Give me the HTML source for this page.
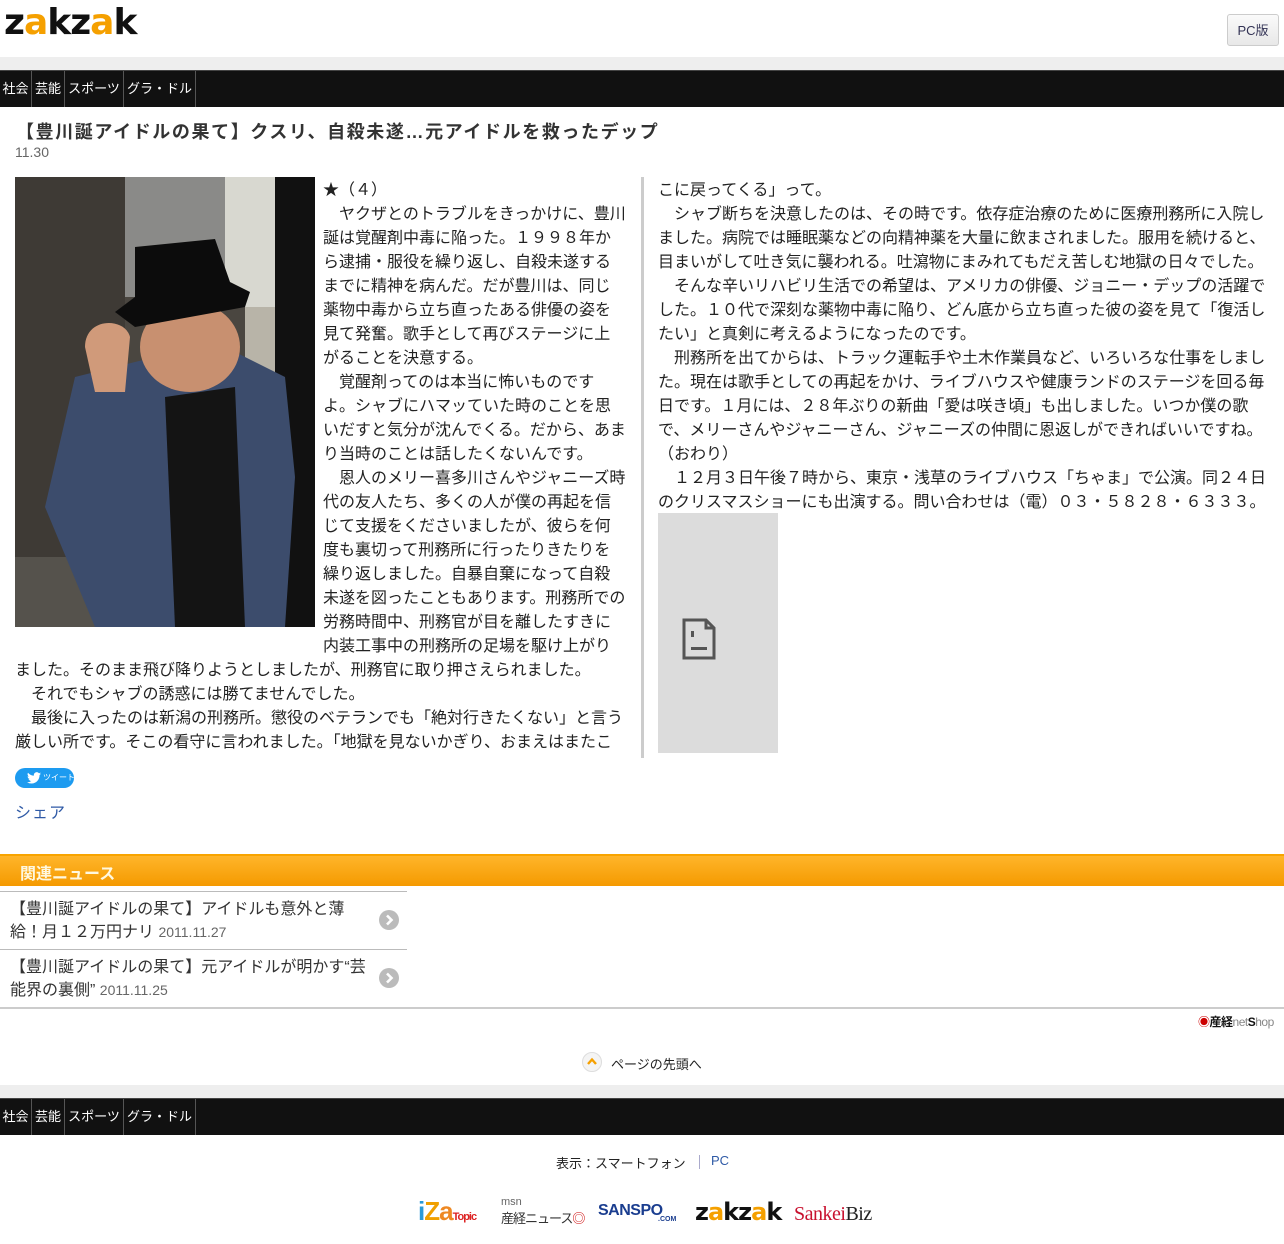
<!DOCTYPE html>
<html><head><meta charset="utf-8">
<style>
*{margin:0;padding:0;box-sizing:border-box}
body{width:1284px;height:1244px;background:#fff;font-family:"Liberation Sans","Noto Sans CJK JP",sans-serif;color:#222;position:relative;overflow:hidden}
.a{position:absolute;white-space:nowrap}
.nav{position:absolute;left:0;width:1284px;height:37px;background:#111;border-top:1px solid #444}
.nav span{position:absolute;top:0;height:36px;line-height:36px;color:#fff;font-size:13px;border-right:1px solid #555;text-align:center;overflow:hidden}
.t{font-size:16px;line-height:24px;letter-spacing:0;color:#222}
.logo{font-family:"DejaVu Sans",sans-serif;font-weight:bold;letter-spacing:-1px}
.logo i{font-style:normal;color:#f5a000}
</style></head><body>
<div class="a logo" style="left:4px;top:2px;font-size:36px;color:#111">z<i>a</i>kz<i>a</i>k</div>
<div class="a" style="left:1227px;top:14px;width:52px;height:32px;border:1px solid #ccc;border-radius:3px;background:linear-gradient(#fafafa,#e8e8e8);font-size:13px;color:#335;text-align:center;line-height:32px">PC版</div>
<div class="a" style="left:0;top:57px;width:1284px;height:13px;background:#eee"></div>
<div class="nav" style="top:70px"><span style="left:0;width:32px">社会</span><span style="left:32px;width:33px">芸能</span><span style="left:65px;width:59px">スポーツ</span><span style="left:124px;width:72px">グラ・ドル</span></div>
<div class="a" style="left:16px;top:118px;font-size:18px;font-weight:bold;letter-spacing:1.6px;color:#333">【豊川誕アイドルの果て】クスリ、自殺未遂…元アイドルを救ったデップ</div>
<div class="a" style="left:15px;top:144px;font-size:14px;color:#666">11.30</div>
<svg class="a" style="left:15px;top:177px" width="300" height="450" viewBox="0 0 300 450">
<rect width="300" height="450" fill="#4a4640"/>
<rect x="0" y="0" width="110" height="450" fill="#3e3a35"/>
<rect x="110" y="0" width="100" height="120" fill="#8a8a88"/>
<rect x="210" y="0" width="50" height="130" fill="#d8d8d0"/>
<rect x="230" y="130" width="40" height="220" fill="#b8b4a8"/>
<rect x="260" y="0" width="40" height="450" fill="#111"/>
<rect x="0" y="380" width="100" height="70" fill="#55524c"/>
<path d="M30 330 L60 200 L140 180 L210 170 L270 200 L280 300 L270 450 L80 450 Z" fill="#3c4c6c"/>
<path d="M150 220 L220 210 L230 450 L160 450 Z" fill="#141414"/>
<ellipse cx="175" cy="170" rx="50" ry="45" fill="#c89070"/>
<path d="M70 170 C70 140 110 140 115 160 L110 215 L80 215 Z" fill="#d09a7a"/>
<path d="M120 70 L200 62 L215 105 L235 115 L230 130 L120 150 L100 135 L120 120 Z" fill="#0c0c0c"/>
</svg>
<div class="t">
<div class="a" style="left:323px;top:179px">★（４）</div>
<div class="a" style="left:323px;top:203px">　ヤクザとのトラブルをきっかけに、豊川</div>
<div class="a" style="left:323px;top:227px">誕は覚醒剤中毒に陥った。１９９８年か</div>
<div class="a" style="left:323px;top:251px">ら逮捕・服役を繰り返し、自殺未遂する</div>
<div class="a" style="left:323px;top:275px">までに精神を病んだ。だが豊川は、同じ</div>
<div class="a" style="left:323px;top:299px">薬物中毒から立ち直ったある俳優の姿を</div>
<div class="a" style="left:323px;top:323px">見て発奮。歌手として再びステージに上</div>
<div class="a" style="left:323px;top:347px">がることを決意する。</div>
<div class="a" style="left:323px;top:371px">　覚醒剤ってのは本当に怖いものです</div>
<div class="a" style="left:323px;top:395px">よ。シャブにハマッていた時のことを思</div>
<div class="a" style="left:323px;top:419px">いだすと気分が沈んでくる。だから、あま</div>
<div class="a" style="left:323px;top:443px">り当時のことは話したくないんです。</div>
<div class="a" style="left:323px;top:467px">　恩人のメリー喜多川さんやジャニーズ時</div>
<div class="a" style="left:323px;top:491px">代の友人たち、多くの人が僕の再起を信</div>
<div class="a" style="left:323px;top:515px">じて支援をくださいましたが、彼らを何</div>
<div class="a" style="left:323px;top:539px">度も裏切って刑務所に行ったりきたりを</div>
<div class="a" style="left:323px;top:563px">繰り返しました。自暴自棄になって自殺</div>
<div class="a" style="left:323px;top:587px">未遂を図ったこともあります。刑務所での</div>
<div class="a" style="left:323px;top:611px">労務時間中、刑務官が目を離したすきに</div>
<div class="a" style="left:323px;top:635px">内装工事中の刑務所の足場を駆け上がり</div>
<div class="a" style="left:15px;top:659px">ました。そのまま飛び降りようとしましたが、刑務官に取り押さえられました。</div>
<div class="a" style="left:15px;top:683px">　それでもシャブの誘惑には勝てませんでした。</div>
<div class="a" style="left:15px;top:707px">　最後に入ったのは新潟の刑務所。懲役のベテランでも「絶対行きたくない」と言う</div>
<div class="a" style="left:15px;top:731px">厳しい所です。そこの看守に言われました。「地獄を見ないかぎり、おまえはまたこ</div>
</div>
<div class="a" style="left:641px;top:177px;width:3px;height:581px;background:#ccc"></div>
<div class="t">
<div class="a" style="left:658px;top:179px">こに戻ってくる」って。</div>
<div class="a" style="left:658px;top:203px">　シャブ断ちを決意したのは、その時です。依存症治療のために医療刑務所に入院し</div>
<div class="a" style="left:658px;top:227px">ました。病院では睡眠薬などの向精神薬を大量に飲まされました。服用を続けると、</div>
<div class="a" style="left:658px;top:251px">目まいがして吐き気に襲われる。吐瀉物にまみれてもだえ苦しむ地獄の日々でした。</div>
<div class="a" style="left:658px;top:275px">　そんな辛いリハビリ生活での希望は、アメリカの俳優、ジョニー・デップの活躍で</div>
<div class="a" style="left:658px;top:299px">した。１０代で深刻な薬物中毒に陥り、どん底から立ち直った彼の姿を見て「復活し</div>
<div class="a" style="left:658px;top:323px">たい」と真剣に考えるようになったのです。</div>
<div class="a" style="left:658px;top:347px">　刑務所を出てからは、トラック運転手や土木作業員など、いろいろな仕事をしまし</div>
<div class="a" style="left:658px;top:371px">た。現在は歌手としての再起をかけ、ライブハウスや健康ランドのステージを回る毎</div>
<div class="a" style="left:658px;top:395px">日です。１月には、２８年ぶりの新曲「愛は咲き頃」も出しました。いつか僕の歌</div>
<div class="a" style="left:658px;top:419px">で、メリーさんやジャニーさん、ジャニーズの仲間に恩返しができればいいですね。</div>
<div class="a" style="left:658px;top:443px">（おわり）</div>
<div class="a" style="left:658px;top:467px">　１２月３日午後７時から、東京・浅草のライブハウス「ちゃま」で公演。同２４日</div>
<div class="a" style="left:658px;top:491px">のクリスマスショーにも出演する。問い合わせは（電）０３・５８２８・６３３３。</div>
</div>
<div class="a" style="left:658px;top:513px;width:120px;height:240px;background:#dcdcdc"></div>
<svg class="a" style="left:682px;top:618px" width="34" height="42" viewBox="0 0 34 42"><path d="M2 2 H24 L32 10 V40 H2 Z" fill="none" stroke="#555" stroke-width="3"/><path d="M24 2 V10 H32" fill="none" stroke="#555" stroke-width="3"/><rect x="9" y="13" width="3" height="6" fill="#555"/><rect x="9" y="29" width="16" height="3" fill="#555"/></svg>
<div class="a" style="left:15px;top:768px;width:59px;height:20px;border-radius:10px;background:#1d9bf0;color:#fff;font-size:8px;line-height:20px;padding-left:28px;overflow:hidden">ツイート</div>
<svg class="a" style="left:27px;top:772px" width="14" height="12" viewBox="0 0 24 20"><path d="M24 2.4c-.9.4-1.8.7-2.8.8 1-.6 1.8-1.6 2.2-2.7-1 .6-2 1-3.1 1.200A4.9 4.9 0 0 0 11.9 6 14 14 0 0 1 1.7.9 4.9 4.9 0 0 0 3.2 7.5c-.8 0-1.6-.3-2.2-.6 0 2.4 1.7 4.4 3.9 4.8-.7.2-1.5.2-2.2.1.6 2 2.4 3.4 4.6 3.4A9.9 9.9 0 0 1 0 17.3 14 14 0 0 0 7.5 19.5c9 0 14-7.5 14-14v-.6c1-.7 1.8-1.6 2.5-2.5z" fill="#fff"/></svg>
<div class="a" style="left:15px;top:799px;font-size:16px;color:#2f5aa6;letter-spacing:1px">シェア</div>
<div class="a" style="left:0;top:854px;width:1284px;height:32px;background:linear-gradient(#ffb52a,#f59a00);border-top:2px solid #f8a400"></div>
<div class="a" style="left:20px;top:860px;font-size:16px;font-weight:bold;color:#fff8e0">関連ニュース</div>
<div class="a" style="left:0;top:891px;width:407px;height:1px;background:#bbb"></div>
<div class="a" style="left:10px;top:898px;font-size:16px;line-height:23px;color:#333">【豊川誕アイドルの果て】アイドルも意外と薄<br>給！月１２万円ナリ <span style="font-size:14px;color:#666">2011.11.27</span></div>
<div class="a" style="left:0;top:949px;width:407px;height:1px;background:#bbb"></div>
<div class="a" style="left:10px;top:956px;font-size:16px;line-height:23px;color:#333">【豊川誕アイドルの果て】元アイドルが明かす“芸<br>能界の裏側” <span style="font-size:14px;color:#666">2011.11.25</span></div>
<svg class="a" style="left:379px;top:910px" width="20" height="20"><circle cx="10" cy="10" r="10" fill="#bbb"/><path d="M8 5.5 L12.5 10 L8 14.5" stroke="#fff" stroke-width="2.6" fill="none"/></svg>
<svg class="a" style="left:379px;top:968px" width="20" height="20"><circle cx="10" cy="10" r="10" fill="#bbb"/><path d="M8 5.5 L12.5 10 L8 14.5" stroke="#fff" stroke-width="2.6" fill="none"/></svg>
<div class="a" style="left:0;top:1007px;width:1284px;height:2px;background:#ccc"></div>
<div class="a" style="left:1198px;top:1013px;font-size:12px;color:#111;letter-spacing:-0.5px"><span style="color:#c00">◉</span><b>産経</b><span style="color:#888">net</span><b>S</b><span style="color:#888">hop</span></div>
<svg class="a" style="left:582px;top:1052px" width="20" height="20"><circle cx="10" cy="10" r="9.5" fill="#f4f4f4" stroke="#ddd"/><path d="M6 12 L10 7.5 L14 12" stroke="#f5a000" stroke-width="2.4" fill="none"/></svg>
<div class="a" style="left:611px;top:1054px;font-size:13px;color:#222">ページの先頭へ</div>
<div class="a" style="left:0;top:1085px;width:1284px;height:13px;background:#eee"></div>
<div class="nav" style="top:1098px"><span style="left:0;width:32px">社会</span><span style="left:32px;width:33px">芸能</span><span style="left:65px;width:59px">スポーツ</span><span style="left:124px;width:72px">グラ・ドル</span></div>
<div class="a" style="left:556px;top:1153px;font-size:13px;color:#222">表示：スマートフォン</div>
<div class="a" style="left:699px;top:1155px;width:1px;height:14px;background:#aac"></div>
<div class="a" style="left:711px;top:1153px;font-size:13px;color:#2f5aa6">PC</div>
<div class="a" style="left:418px;top:1196px;font-size:26px;font-weight:bold;color:#2a9ad8;letter-spacing:-1px">i<span style="color:#f0a000">Z</span><span style="color:#e82">a</span><span style="font-size:11px;color:#d22">Topic</span></div>
<div class="a" style="left:501px;top:1196px;font-size:11px;color:#666">msn</div>
<div class="a" style="left:501px;top:1208px;font-size:13px;color:#333;letter-spacing:-1px">産経ニュース<span style="color:#c00">◎</span></div>
<div class="a" style="left:598px;top:1202px;font-size:16px;font-weight:bold;color:#1a3d8f;letter-spacing:-0.5px">SANSPO</div>
<div class="a" style="left:658px;top:1216px;font-size:7px;font-weight:bold;color:#1a3d8f">.COM</div>
<div class="a logo" style="left:695px;top:1198px;font-size:24px;color:#111">z<i>a</i>kz<i>a</i>k</div>
<div class="a" style="left:794px;top:1203px;font-size:20px;color:#c8102e;font-family:'Liberation Serif',serif;letter-spacing:-0.5px">Sankei<span style="color:#222">Biz</span></div>
</body></html>
